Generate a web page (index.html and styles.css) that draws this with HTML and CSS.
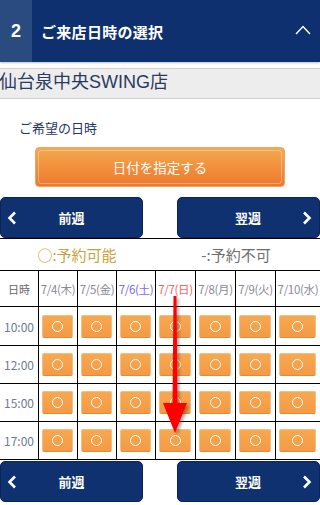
FILE: index.html
```html
<!DOCTYPE html>
<html lang="ja">
<head>
<meta charset="utf-8">
<title>ご来店日時の選択</title>
<link rel="stylesheet" href="styles.css">
</head>
<body>
<div class="page">
  <header class="step-head">
    <div class="step-num">2</div>
    <div class="step-title">ご来店日時の選択</div>
    <svg class="step-toggle" width="16" height="10" viewBox="0 0 16 10"><polyline points="1,9 8,1.5 15,9" fill="none" stroke="#fff" stroke-width="1.5"/></svg>
  </header>

  <div class="store">仙台泉中央SWING店</div>

  <p class="label">ご希望の日時</p>

  <div class="date-btn"><span>日付を指定する</span></div>

  <div class="week-nav">
    <div class="week-btn prev">
      <svg class="chev" width="10" height="14" viewBox="0 0 10 14"><polyline points="8,1.5 2.5,7 8,12.5" fill="none" stroke="#fff" stroke-width="2.6"/></svg>
      <span>前週</span>
    </div>
    <div class="week-btn next">
      <span>翌週</span>
      <svg class="chev" width="10" height="14" viewBox="0 0 10 14"><polyline points="2,1.5 7.5,7 2,12.5" fill="none" stroke="#fff" stroke-width="2.6"/></svg>
    </div>
  </div>

  <div class="legend">
    <div class="legend-ok">○:予約可能</div>
    <div class="legend-ng">-:予約不可</div>
  </div>

  <div class="grid">
    <div class="cell head time">日時</div>
    <div class="cell head">7/4(木)</div>
    <div class="cell head">7/5(金)</div>
    <div class="cell head sat">7/6(土)</div>
    <div class="cell head sun">7/7(日)</div>
    <div class="cell head">7/8(月)</div>
    <div class="cell head">7/9(火)</div>
    <div class="cell head last">7/10(水)</div>

    <div class="cell time">10:00</div>
    <div class="cell"><span class="slot"><i></i></span></div>
    <div class="cell"><span class="slot"><i></i></span></div>
    <div class="cell"><span class="slot"><i></i></span></div>
    <div class="cell"><span class="slot"><i></i></span></div>
    <div class="cell"><span class="slot"><i></i></span></div>
    <div class="cell"><span class="slot"><i></i></span></div>
    <div class="cell last"><span class="slot"><i></i></span></div>

    <div class="cell time">12:00</div>
    <div class="cell"><span class="slot"><i></i></span></div>
    <div class="cell"><span class="slot"><i></i></span></div>
    <div class="cell"><span class="slot"><i></i></span></div>
    <div class="cell"><span class="slot"><i></i></span></div>
    <div class="cell"><span class="slot"><i></i></span></div>
    <div class="cell"><span class="slot"><i></i></span></div>
    <div class="cell last"><span class="slot"><i></i></span></div>

    <div class="cell time">15:00</div>
    <div class="cell"><span class="slot"><i></i></span></div>
    <div class="cell"><span class="slot"><i></i></span></div>
    <div class="cell"><span class="slot"><i></i></span></div>
    <div class="cell"><span class="slot"><i></i></span></div>
    <div class="cell"><span class="slot"><i></i></span></div>
    <div class="cell"><span class="slot"><i></i></span></div>
    <div class="cell last"><span class="slot"><i></i></span></div>

    <div class="cell time">17:00</div>
    <div class="cell"><span class="slot"><i></i></span></div>
    <div class="cell"><span class="slot"><i></i></span></div>
    <div class="cell"><span class="slot"><i></i></span></div>
    <div class="cell"><span class="slot"><i></i></span></div>
    <div class="cell"><span class="slot"><i></i></span></div>
    <div class="cell"><span class="slot"><i></i></span></div>
    <div class="cell last"><span class="slot"><i></i></span></div>
  </div>

  <div class="week-nav bottom">
    <div class="week-btn prev">
      <svg class="chev" width="10" height="14" viewBox="0 0 10 14"><polyline points="8,1.5 2.5,7 8,12.5" fill="none" stroke="#fff" stroke-width="2.6"/></svg>
      <span>前週</span>
    </div>
    <div class="week-btn next">
      <span>翌週</span>
      <svg class="chev" width="10" height="14" viewBox="0 0 10 14"><polyline points="2,1.5 7.5,7 2,12.5" fill="none" stroke="#fff" stroke-width="2.6"/></svg>
    </div>
  </div>

  <svg class="pointer" width="320" height="505" viewBox="0 0 320 505">
    <defs>
      <filter id="sh" x="-50%" y="-10%" width="200%" height="130%">
        <feDropShadow dx="2" dy="2" stdDeviation="1.5" flood-color="#000" flood-opacity="0.35"/>
      </filter>
    </defs>
    <g filter="url(#sh)" fill="#ff0000">
      <polygon points="173.5,296 176.5,296 177.5,405 172.5,405"/>
      <polygon points="163,403 187,403 175,433"/>
    </g>
  </svg>
</div>
</body>
</html>
```

FILE: styles.css
```css
* { box-sizing: border-box; }
html, body { margin: 0; padding: 0; background: #fff; }
body {
  font-family: "Noto Sans CJK JP", "Liberation Sans", sans-serif;
  width: 320px;
  height: 505px;
  overflow: hidden;
}
.page { position: relative; width: 320px; height: 505px; }

.step-head {
  height: 62px;
  background: #0e306e;
  display: flex;
  align-items: center;
  color: #fff;
  box-shadow: 0 1px 2px rgba(0,0,0,0.25);
}
.step-num {
  width: 32px;
  height: 100%;
  background: #2a4b80;
  display: flex;
  align-items: center;
  justify-content: center;
  font-family: "Liberation Sans", sans-serif;
  font-weight: bold;
  font-size: 18px;
}
.step-title {
  flex: 1;
  padding-left: 9px;
  font-weight: bold;
  font-size: 15px;
  letter-spacing: 0.3px;
}
.step-toggle { margin-right: 9px; margin-top: -2px; }

.store {
  margin-top: 6px;
  height: 31px;
  background: #ededed;
  border-top: 1px solid #cfcfcf;
  border-bottom: 1px solid #cfcfcf;
  font-family: "Liberation Sans", "Noto Sans CJK JP", sans-serif;
  font-size: 18px;
  line-height: 27px;
  color: #2a3a60;
  text-indent: -1px;
}

.label {
  margin: 19px 0 0 19px;
  height: 20px;
  line-height: 20px;
  font-size: 13px;
  color: #1f3566;
}

.date-btn {
  margin: 9px auto 0 35px;
  width: 250px;
  height: 40px;
  border-radius: 4px;
  border: 1px solid #f0a45e;
  background: linear-gradient(#f6a84f, #ec782c);
  padding: 2px;
}
.date-btn span {
  display: flex;
  align-items: center;
  justify-content: center;
  height: 100%;
  border: 1px solid rgba(255,255,255,0.35);
  border-radius: 3px;
  color: #fff;
  font-size: 13.5px;
}

.week-nav {
  margin-top: 10px;
  height: 41px;
  display: flex;
  justify-content: space-between;
}
.week-nav.bottom { margin-top: 1px; }
.week-btn {
  width: 143px;
  height: 41px;
  background: #0f3170;
  border-radius: 5px;
  border: 1px solid #0a2558;
  display: flex;
  align-items: center;
  color: #fff;
  font-weight: bold;
  font-size: 13px;
}
.week-btn span { flex: 1; text-align: center; }
.week-btn.prev .chev { margin-left: 6px; }
.week-btn.prev span { padding-right: 16px; }
.week-btn.next .chev { margin-right: 7px; }
.week-btn.next span { padding-left: 16px; }

.legend {
  border-top: 1px solid #000;
  border-bottom: 1px solid #000;
  height: 33px;
  display: flex;
  align-items: center;
  font-size: 15px;
}
.legend > div { width: 50%; text-align: center; }
.legend-ok { color: #c8a43c; padding-right: 6px; }
.legend-ng { color: #6e6e6e; padding-right: 8px; }

.grid {
  display: grid;
  grid-template-columns: 39px 39px 39px 39px 40px 40px 40px 44px;
  grid-template-rows: 36px 39px 38px 38px 38px;
}
.cell {
  border-right: 1px solid #000;
  border-bottom: 1px solid #000;
  display: flex;
  align-items: center;
  justify-content: center;
}
.cell.last { border-right: none; }
.cell.head {
  font-size: 11.5px;
  color: #8a8a94;
  white-space: nowrap;
  letter-spacing: -0.3px;
}
.cell.head.sat { color: #7a6cf2; }
.cell.head.sun { color: #f26666; }
.cell.head.time { font-size: 11px; color: #666; letter-spacing: 0; }
.cell.time { font-size: 12px; color: #6f7a93; }

.slot {
  width: calc(100% - 7px);
  margin-left: -1px;
  height: 23px;
  border-radius: 2px;
  background: linear-gradient(#f7a850, #f39a45);
  border: 1px solid #f6bd80;
  border-bottom-color: #e9873c;
  display: flex;
  align-items: center;
  justify-content: center;
}
.slot i {
  display: block;
  width: 11px;
  height: 11px;
  border: 1px solid #fff;
  border-radius: 50%;
}

.pointer {
  position: absolute;
  top: 0;
  left: 0;
  pointer-events: none;
}
```
